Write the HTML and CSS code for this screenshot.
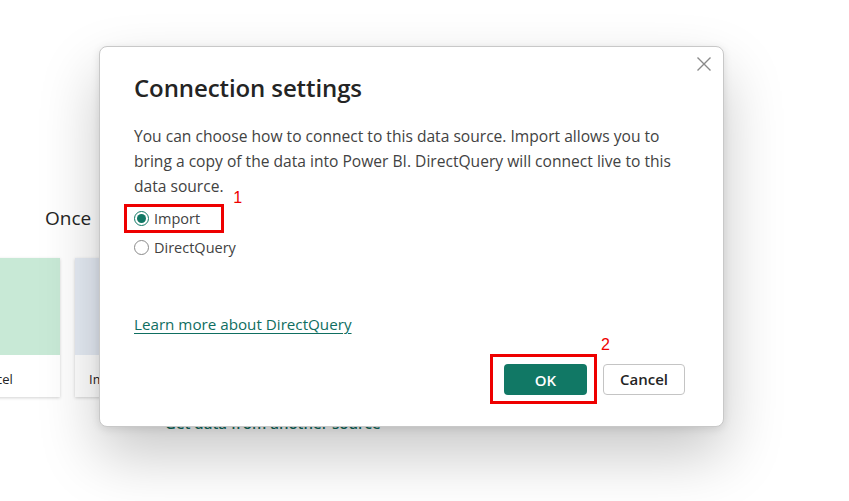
FILE: index.html
```html
<!DOCTYPE html>
<html>
<head>
<meta charset="utf-8">
<link rel="stylesheet" href="styles.css">
</head>
<body>
<div class="page">
  <div class="heading">Once</div>
  <div class="cards">
    <div class="card"><div class="card-top green"></div><div class="card-label">Excel</div></div>
    <div class="card card2"><div class="card-top blue"></div><div class="card-label">Import data</div></div>
  </div>
  <div class="another">Get data from another source</div>
</div>

<div class="dialog">
  <button class="close" aria-label="Close">
    <svg width="16" height="16" viewBox="0 0 16 16"><path d="M1.5 1.5 L14.5 14.5 M14.5 1.5 L1.5 14.5" stroke="#8a8a8a" stroke-width="1.4" fill="none"/></svg>
  </button>
  <h1 class="title">Connection settings</h1>
  <p class="desc">You can choose how to connect to this data source. Import allows you to bring a copy of the data into Power BI. DirectQuery will connect live to this data source.</p>
  <div class="options">
    <label class="option highlighted">
      <span class="radio checked"></span><span>Import</span>
      <span class="marker m1">1</span>
    </label>
    <label class="option">
      <span class="radio"></span><span>DirectQuery</span>
    </label>
  </div>
  <a class="link" href="#">Learn more about DirectQuery</a>
  <div class="actions">
    <div class="ok-wrap">
      <button class="btn primary">OK</button>
      <span class="marker m2">2</span>
    </div>
    <button class="btn secondary">Cancel</button>
  </div>
</div>
</body>
</html>
```
FILE: styles.css
```css
html, body {
  margin: 0;
  padding: 0;
  background: #ffffff;
  font-family: "Open Sans", "Noto Sans", sans-serif;
  color: #242424;
}
body {
  width: 849px;
  height: 501px;
  overflow: hidden;
  position: relative;
}
.page {
  padding: 206px 0 0 0;
}
.heading {
  font-size: 19px;
  margin-left: 45px;
  line-height: 24px;
}
.cards {
  display: flex;
  gap: 15px;
  margin-top: 28px;
  margin-left: -36px;
}
.card {
  width: 96px;
  height: 139px;
  background: #fff;
  box-shadow: 0 1px 3px rgba(0,0,0,0.18);
  display: flex;
  flex-direction: column;
}
.card2 { width: 150px; }
.card-top { height: 97px; }
.green { background: #c8e9d6; }
.blue { background: #e6ecf5; }
.card-label {
  font-size: 13px;
  padding: 15px 0 0 18px;
}
.card2 .card-label { padding-left: 14px; }
.another {
  margin: 16px 0 0 165px;
  color: #0f6e61;
  font-size: 15px;
  font-weight: 600;
}

.dialog {
  position: absolute;
  left: 99px;
  top: 46px;
  width: 625px;
  height: 381px;
  box-sizing: border-box;
  background: #fff;
  border: 1px solid #c8c8c8;
  border-radius: 8px;
  box-shadow: 0 28px 60px rgba(0,0,0,0.22), 0 2px 8px rgba(0,0,0,0.1);
  padding: 25px 38px 0 34px;
}
.close {
  position: absolute;
  right: 11px;
  top: 9px;
  background: none;
  border: 0;
  padding: 0;
  width: 16px;
  height: 16px;
  cursor: pointer;
}
.title {
  margin: 0;
  font-size: 24px;
  font-weight: 600;
  line-height: 32px;
  color: #242424;
  letter-spacing: -0.1px;
}
.desc {
  margin: 20px 0 0 0;
  font-size: 15.6px;
  line-height: 25px;
  color: #424242;
  max-width: 545px;
}
.options {
  display: flex;
  flex-direction: column;
  gap: 5px;
  margin-top: 8px;
}
.option {
  display: flex;
  align-items: center;
  gap: 5px;
  font-size: 14.5px;
  color: #424242;
  height: 24px;
  position: relative;
  width: max-content;
}
.option.highlighted {
  outline: 3px solid #ee0000;
  outline-offset: 0;
  margin-left: -7px;
  padding: 0 21px 0 7px;
  height: 23px;
}
.radio {
  width: 15px;
  height: 15px;
  border: 1px solid #8a8a8a;
  border-radius: 50%;
  box-sizing: border-box;
  display: inline-flex;
  align-items: center;
  justify-content: center;
  background: #fff;
}
.radio.checked {
  border-color: #117865;
}
.radio.checked::after {
  content: "";
  width: 9px;
  height: 9px;
  border-radius: 50%;
  background: #117865;
}
.marker {
  position: absolute;
  color: #ee0000;
  font-family: "Liberation Sans", sans-serif;
  font-size: 16px;
  line-height: 18px;
}
.m1 { right: -21px; top: -18px; }
.m2 { right: -16px; top: -21px; }
.link {
  display: inline-block;
  margin-top: 55px;
  color: #0f6e61;
  font-size: 15.2px;
  text-decoration: underline;
  text-underline-offset: 3px;
}
.actions {
  display: flex;
  justify-content: flex-end;
  gap: 9px;
  margin-top: 22px;
  align-items: center;
}
.ok-wrap {
  position: relative;
  outline: 3px solid #ee0000;
  padding: 7px 7px 6px 11px;
}
.btn {
  height: 31px;
  border-radius: 4px;
  font-family: "Open Sans", "Noto Sans", sans-serif;
  font-size: 15px;
  font-weight: 600;
  padding: 0;
  cursor: pointer;
  display: block;
}
.primary {
  width: 83px;
  background: #117865;
  border: 0;
  color: #fff;
}
.secondary {
  width: 82px;
  background: #fff;
  border: 1px solid #c4c4c4;
  color: #242424;
}
```
